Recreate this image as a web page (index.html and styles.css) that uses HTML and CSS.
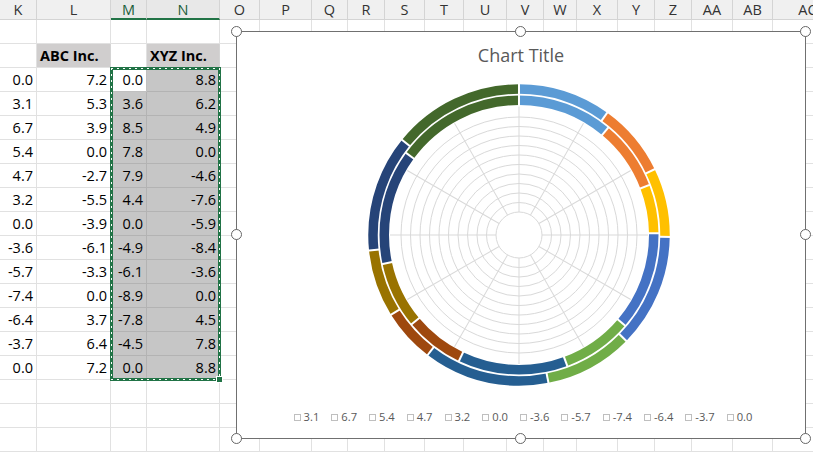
FILE: index.html
```html
<!DOCTYPE html>
<html>
<head>
<meta charset="utf-8">
<link rel="stylesheet" href="styles.css">
</head>
<body>
<div class="sheet">
  <div class="row heads">
    <span>K</span><span>L</span><span class="sel">M</span><span class="sel">N</span><span>O</span><span>P</span><span>Q</span><span>R</span><span>S</span><span>T</span><span>U</span><span>V</span><span>W</span><span>X</span><span>Y</span><span>Z</span><span>AA</span><span>AB</span><span>AC</span>
  </div>
  <div class="row"><span></span><span></span><span></span><span></span><span></span><span></span><span></span><span></span><span></span><span></span><span></span><span></span><span></span><span></span><span></span><span></span><span></span><span></span><span></span></div>
  <div class="row"><span></span><span class="lbl">ABC Inc.</span><span></span><span class="lbl">XYZ Inc.</span><span class="rest"></span></div>
  <div class="row"><span class="n">0.0</span><span class="n">7.2</span><span class="n act">0.0</span><span class="n s">8.8</span><span class="rest"></span></div>
  <div class="row"><span class="n">3.1</span><span class="n">5.3</span><span class="n s">3.6</span><span class="n s">6.2</span><span class="rest"></span></div>
  <div class="row"><span class="n">6.7</span><span class="n">3.9</span><span class="n s">8.5</span><span class="n s">4.9</span><span class="rest"></span></div>
  <div class="row"><span class="n">5.4</span><span class="n">0.0</span><span class="n s">7.8</span><span class="n s">0.0</span><span class="rest"></span></div>
  <div class="row"><span class="n">4.7</span><span class="n">-2.7</span><span class="n s">7.9</span><span class="n s">-4.6</span><span class="rest"></span></div>
  <div class="row"><span class="n">3.2</span><span class="n">-5.5</span><span class="n s">4.4</span><span class="n s">-7.6</span><span class="rest"></span></div>
  <div class="row"><span class="n">0.0</span><span class="n">-3.9</span><span class="n s">0.0</span><span class="n s">-5.9</span><span class="rest"></span></div>
  <div class="row"><span class="n">-3.6</span><span class="n">-6.1</span><span class="n s">-4.9</span><span class="n s">-8.4</span><span class="rest"></span></div>
  <div class="row"><span class="n">-5.7</span><span class="n">-3.3</span><span class="n s">-6.1</span><span class="n s">-3.6</span><span class="rest"></span></div>
  <div class="row"><span class="n">-7.4</span><span class="n">0.0</span><span class="n s">-8.9</span><span class="n s">0.0</span><span class="rest"></span></div>
  <div class="row"><span class="n">-6.4</span><span class="n">3.7</span><span class="n s">-7.8</span><span class="n s">4.5</span><span class="rest"></span></div>
  <div class="row"><span class="n">-3.7</span><span class="n">6.4</span><span class="n s">-4.5</span><span class="n s">7.8</span><span class="rest"></span></div>
  <div class="row"><span class="n">0.0</span><span class="n">7.2</span><span class="n s">0.0</span><span class="n s">8.8</span><span class="rest"></span></div>
  <div class="row"><span></span><span></span><span></span><span></span><span class="rest"></span></div>
  <div class="row"><span></span><span></span><span></span><span></span><span class="rest"></span></div>
  <div class="row"><span></span><span></span><span></span><span></span><span></span><span></span><span></span><span></span><span></span><span></span><span></span><span></span><span></span><span></span><span></span><span></span><span></span><span></span><span></span></div>

  <div class="marquee"><span class="fillhandle"></span></div>

  <div class="chart">
    <span class="h tl"></span><span class="h tc"></span><span class="h tr"></span>
    <span class="h ml"></span><span class="h mr"></span>
    <span class="h bl"></span><span class="h bc"></span><span class="h br"></span>
    <div class="title">Chart Title</div>
    <svg class="plot" width="568" height="320" viewBox="0 0 568 320">
      <g transform="translate(282 157)">
        <g fill="none" stroke="#d9d9d9" stroke-width="1">
          <circle r="23"/><circle r="32.5"/><circle r="42"/><circle r="51.5"/><circle r="61"/><circle r="70.5"/><circle r="80"/><circle r="89.5"/><circle r="99"/><circle r="108.5"/><circle r="118"/>
        </g>
        <g stroke="#d9d9d9" stroke-width="1">
          <line y1="-23" y2="-129"/>
          <line y1="-23" y2="-129" transform="rotate(30)"/>
          <line y1="-23" y2="-129" transform="rotate(60)"/>
          <line y1="-23" y2="-129" transform="rotate(90)"/>
          <line y1="-23" y2="-129" transform="rotate(120)"/>
          <line y1="-23" y2="-129" transform="rotate(150)"/>
          <line y1="-23" y2="-129" transform="rotate(180)"/>
          <line y1="-23" y2="-129" transform="rotate(210)"/>
          <line y1="-23" y2="-129" transform="rotate(240)"/>
          <line y1="-23" y2="-129" transform="rotate(270)"/>
          <line y1="-23" y2="-129" transform="rotate(300)"/>
          <line y1="-23" y2="-129" transform="rotate(330)"/>
        </g>
        <g transform="rotate(-90)" fill="none" stroke-width="9.5">
          <circle r="146" pathLength="360" stroke="#5b9bd5" stroke-dasharray="35.827 400" stroke-dashoffset="0"/>
          <circle r="146" pathLength="360" stroke="#ed7d31" stroke-dasharray="28.315 400" stroke-dashoffset="-35.827"/>
          <circle r="146" pathLength="360" stroke="#ffc000" stroke-dasharray="26.581 400" stroke-dashoffset="-64.142"/>
          <circle r="146" pathLength="360" stroke="#4472c4" stroke-dasharray="43.917 400" stroke-dashoffset="-90.723"/>
          <circle r="146" pathLength="360" stroke="#70ad47" stroke-dasharray="34.093 400" stroke-dashoffset="-134.64"/>
          <circle r="146" pathLength="360" stroke="#255e91" stroke-dasharray="48.539 400" stroke-dashoffset="-168.733"/>
          <circle r="146" pathLength="360" stroke="#9e480e" stroke-dasharray="20.803 400" stroke-dashoffset="-217.272"/>
          <circle r="146" pathLength="360" stroke="#997300" stroke-dasharray="26.003 400" stroke-dashoffset="-238.075"/>
          <circle r="146" pathLength="360" stroke="#264478" stroke-dasharray="45.072 400" stroke-dashoffset="-264.078"/>
          <circle r="146" pathLength="360" stroke="#43682b" stroke-dasharray="50.851 400" stroke-dashoffset="-309.15"/>

          <circle r="134.75" pathLength="360" stroke="#5b9bd5" stroke-dasharray="39.75 400" stroke-dashoffset="0"/>
          <circle r="134.75" pathLength="360" stroke="#ed7d31" stroke-dasharray="29.25 400" stroke-dashoffset="-39.75"/>
          <circle r="134.75" pathLength="360" stroke="#ffc000" stroke-dasharray="20.25 400" stroke-dashoffset="-69"/>
          <circle r="134.75" pathLength="360" stroke="#4472c4" stroke-dasharray="41.25 400" stroke-dashoffset="-89.25"/>
          <circle r="134.75" pathLength="360" stroke="#70ad47" stroke-dasharray="29.25 400" stroke-dashoffset="-130.5"/>
          <circle r="134.75" pathLength="360" stroke="#255e91" stroke-dasharray="45.75 400" stroke-dashoffset="-159.75"/>
          <circle r="134.75" pathLength="360" stroke="#9e480e" stroke-dasharray="24.75 400" stroke-dashoffset="-205.5"/>
          <circle r="134.75" pathLength="360" stroke="#997300" stroke-dasharray="27.75 400" stroke-dashoffset="-230.25"/>
          <circle r="134.75" pathLength="360" stroke="#264478" stroke-dasharray="48 400" stroke-dashoffset="-258"/>
          <circle r="134.75" pathLength="360" stroke="#43682b" stroke-dasharray="54 400" stroke-dashoffset="-306"/>
        </g>
        <g stroke="#ffffff" stroke-width="2">
          <line y1="-140.5" y2="-153"/>
          <line y1="-140.5" y2="-153" transform="rotate(35.827)"/>
          <line y1="-140.5" y2="-153" transform="rotate(64.142)"/>
          <line y1="-140.5" y2="-153" transform="rotate(90.723)"/>
          <line y1="-140.5" y2="-153" transform="rotate(134.64)"/>
          <line y1="-140.5" y2="-153" transform="rotate(168.733)"/>
          <line y1="-140.5" y2="-153" transform="rotate(217.272)"/>
          <line y1="-140.5" y2="-153" transform="rotate(238.075)"/>
          <line y1="-140.5" y2="-153" transform="rotate(264.078)"/>
          <line y1="-140.5" y2="-153" transform="rotate(309.15)"/>
          <line y1="-128.5" y2="-140.5"/>
          <line y1="-128.5" y2="-140.5" transform="rotate(39.75)"/>
          <line y1="-128.5" y2="-140.5" transform="rotate(69)"/>
          <line y1="-128.5" y2="-140.5" transform="rotate(89.25)"/>
          <line y1="-128.5" y2="-140.5" transform="rotate(130.5)"/>
          <line y1="-128.5" y2="-140.5" transform="rotate(159.75)"/>
          <line y1="-128.5" y2="-140.5" transform="rotate(205.5)"/>
          <line y1="-128.5" y2="-140.5" transform="rotate(230.25)"/>
          <line y1="-128.5" y2="-140.5" transform="rotate(258)"/>
          <line y1="-128.5" y2="-140.5" transform="rotate(306)"/>
        </g>
      </g>
    </svg>
    <div class="legend">
      <span class="li"><i></i>3.1</span>
      <span class="li"><i></i>6.7</span>
      <span class="li"><i></i>5.4</span>
      <span class="li"><i></i>4.7</span>
      <span class="li"><i></i>3.2</span>
      <span class="li"><i></i>0.0</span>
      <span class="li"><i></i>-3.6</span>
      <span class="li"><i></i>-5.7</span>
      <span class="li"><i></i>-7.4</span>
      <span class="li"><i></i>-6.4</span>
      <span class="li"><i></i>-3.7</span>
      <span class="li"><i></i>0.0</span>
    </div>
  </div>
</div>
</body>
</html>
```
FILE: styles.css
```css
html, body {
  margin: 0;
  padding: 0;
  background: #ffffff;
  overflow: hidden;
}
body {
  width: 813px;
  height: 453px;
  font-family: "Open Sans", "Noto Sans", sans-serif;
  color: #000;
}
.sheet {
  position: relative;
  width: 813px;
  height: 453px;
  overflow: hidden;
}
.row {
  display: grid;
  grid-template-columns: 37px 74px 36px 73px 40px 52px 36px 37px 40px 39px 43px 37px 33px 41px 37px 37px 41px 40px 70px;
  height: 24px;
}
.row > span {
  box-sizing: border-box;
  border-right: 1px solid #e1e1e1;
  border-bottom: 1px solid #e1e1e1;
  padding: 1px 3px 0 3px;
  font-size: 14.5px;
  line-height: 22px;
  white-space: nowrap;
  overflow: hidden;
}
.row > .rest {
  grid-column: 5 / -1;
  border-right: none;
}
.row > .n {
  text-align: right;
}
.row > .lbl {
  background: #d0cece;
  font-weight: bold;
  border-color: #d0cece #d4d4d4 #e1e1e1 #d0cece;
}
.row > .s {
  background: #c6c6c6;
  border-color: #b3b3b3;
}
.row > .act {
  background: #ffffff;
  border-color: #c0c0c0;
}
.heads {
  height: 20px;
  background: #f0f0f0;
}
.heads > span {
  border-right: 1px solid #d4d4d4;
  border-bottom: 1px solid #d4d4d4;
  text-align: center;
  padding: 0;
  line-height: 19px;
  font-size: 14.5px;
  color: #333333;
}
.heads > span.sel {
  background: #e8e8e8;
  border-bottom: 2px solid #217346;
  color: #1a5d38;
}

.marquee {
  position: absolute;
  left: 110px;
  top: 67px;
  width: 111px;
  height: 314px;
  box-sizing: border-box;
  border: 3px solid #217346;
}
.marquee::after {
  content: "";
  position: absolute;
  left: -2px;
  top: -2px;
  right: -2px;
  bottom: -2px;
  background:
    repeating-linear-gradient(90deg, #ffffff 0 2px, transparent 2px 6px) top / 100% 1px no-repeat,
    repeating-linear-gradient(90deg, #ffffff 0 2px, transparent 2px 6px) bottom / 100% 1px no-repeat,
    repeating-linear-gradient(180deg, #ffffff 0 2px, transparent 2px 6px) left / 1px 100% no-repeat,
    repeating-linear-gradient(180deg, #ffffff 0 2px, transparent 2px 6px) right / 1px 100% no-repeat;
}
.fillhandle {
  position: absolute;
  right: -5px;
  bottom: -5px;
  width: 5px;
  height: 5px;
  background: #217346;
  border: 1px solid #ffffff;
  z-index: 2;
}

.chart {
  position: absolute;
  left: 236px;
  top: 31px;
  width: 570px;
  height: 408px;
  box-sizing: border-box;
  border: 1px solid #707070;
  background: #ffffff;
  display: flex;
  flex-direction: column;
}
.h {
  position: absolute;
  width: 11px;
  height: 11px;
  box-sizing: border-box;
  border: 1.5px solid #666666;
  border-radius: 50%;
  background: #ffffff;
  z-index: 3;
}
.h.tl { left: -6px; top: -6px; }
.h.tc { left: calc(50% - 6px); top: -6px; }
.h.tr { right: -6px; top: -6px; }
.h.ml { left: -6px; top: calc(50% - 6px); }
.h.mr { right: -6px; top: calc(50% - 6px); }
.h.bl { left: -6px; bottom: -6px; }
.h.bc { left: calc(50% - 6px); bottom: -6px; }
.h.br { right: -6px; bottom: -6px; }

.title {
  height: 46px;
  line-height: 46px;
  text-align: center;
  font-size: 18px;
  color: #595959;
}
.plot {
  display: block;
}
.legend {
  margin-top: 12px;
  display: flex;
  justify-content: center;
  gap: 12px;
  font-size: 11.2px;
  line-height: 14px;
  color: #595959;
  padding-left: 4px;
}
.li {
  display: flex;
  align-items: center;
  gap: 3px;
}
.li i {
  display: block;
  width: 7px;
  height: 7px;
  box-sizing: border-box;
  border: 1px solid #bfbfbf;
  margin-top: 1px;
}
```
